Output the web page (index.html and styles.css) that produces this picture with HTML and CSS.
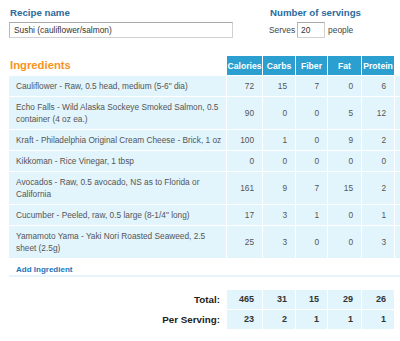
FILE: index.html
```html
<!DOCTYPE html>
<html>
<head>
<meta charset="utf-8">
<link rel="stylesheet" href="styles.css">
</head>
<body>
<div class="page">
  <div class="top">
    <div class="field name">
      <div class="label">Recipe name</div>
      <input class="text" value="Sushi (cauliflower/salmon)">
    </div>
    <div class="field servings">
      <div class="label">Number of servings</div>
      <div class="serves"><span>Serves</span><input class="num" value="20"><span>people</span></div>
    </div>
  </div>

  <table class="grid ing">
    <colgroup>
      <col class="c-name"><col class="c-cal"><col class="c-carb"><col class="c-fib"><col class="c-fat"><col class="c-pro"><col class="c-x">
    </colgroup>
    <thead>
      <tr><th class="title">Ingredients</th><th>Calories</th><th>Carbs</th><th>Fiber</th><th>Fat</th><th>Protein</th><th class="blank"></th></tr>
    </thead>
    <tbody>
      <tr><td class="nm">Cauliflower - Raw, 0.5 head, medium (5-6" dia)</td><td>72</td><td>15</td><td>7</td><td>0</td><td>6</td><td></td></tr>
      <tr><td class="nm">Echo Falls - Wild Alaska Sockeye Smoked Salmon, 0.5 container (4 oz ea.)</td><td>90</td><td>0</td><td>0</td><td>5</td><td>12</td><td></td></tr>
      <tr><td class="nm">Kraft - Philadelphia Original Cream Cheese - Brick, 1 oz</td><td>100</td><td>1</td><td>0</td><td>9</td><td>2</td><td></td></tr>
      <tr><td class="nm">Kikkoman - Rice Vinegar, 1 tbsp</td><td>0</td><td>0</td><td>0</td><td>0</td><td>0</td><td></td></tr>
      <tr><td class="nm">Avocados - Raw, 0.5 avocado, NS as to Florida or California</td><td>161</td><td>9</td><td>7</td><td>15</td><td>2</td><td></td></tr>
      <tr><td class="nm">Cucumber - Peeled, raw, 0.5 large (8-1/4" long)</td><td>17</td><td>3</td><td>1</td><td>0</td><td>1</td><td></td></tr>
      <tr><td class="nm">Yamamoto Yama - Yaki Nori Roasted Seaweed, 2.5 sheet (2.5g)</td><td>25</td><td>3</td><td>0</td><td>0</td><td>3</td><td></td></tr>
    </tbody>
  </table>

  <div class="add"><a class="add-link">Add Ingredient</a></div>

  <table class="grid totals">
    <colgroup>
      <col class="c-name"><col class="c-cal"><col class="c-carb"><col class="c-fib"><col class="c-fat"><col class="c-pro">
    </colgroup>
    <tbody>
      <tr><td class="lbl">Total:</td><td>465</td><td>31</td><td>15</td><td>29</td><td>26</td></tr>
      <tr><td class="lbl">Per Serving:</td><td>23</td><td>2</td><td>1</td><td>1</td><td>1</td></tr>
    </tbody>
  </table>
</div>
</body>
</html>
```
FILE: styles.css
```css
html, body {
  margin: 0;
  padding: 0;
  overflow: hidden;
  background: #fff;
}
body {
  font-family: "Liberation Sans", Arial, sans-serif;
  color: #555;
}
.page {
  padding: 7px 0 0 9px;
}
.top {
  display: flex;
}
.name {
  width: 260px;
}
.label {
  font-weight: bold;
  font-size: 9.7px;
  line-height: 12px;
  height: 12px;
  color: #2a6a9e;
  padding-left: 1px;
}
.text, .num {
  box-sizing: border-box;
  height: 16px;
  margin: 0;
  border: 1px solid #d0d0d0;
  border-top-color: #a8a8a8;
  border-left-color: #b8b8b8;
  font-family: "Liberation Sans", Arial, sans-serif;
  font-size: 8.4px;
  color: #333;
  background: #fff;
  outline: none;
}
.text {
  display: block;
  margin-top: 3px;
  width: 224px;
  padding: 0 4px;
}
.serves {
  display: flex;
  align-items: center;
  margin-top: 3px;
  height: 16px;
  font-size: 8.4px;
  color: #444;
}
.num {
  width: 28px;
  margin: 0 3px 0 2px;
  padding: 0 3px;
}
.grid {
  border-collapse: separate;
  border-spacing: 1px;
  table-layout: fixed;
  margin-left: -1px;
}
.ing {
  margin-top: 17px;
  width: 408px;
}
.totals {
  margin-top: 12px;
  width: 387px;
}
.c-name { width: 217px; }
.c-cal { width: 35px; }
.c-carb { width: 32px; }
.c-fib { width: 31px; }
.c-fat { width: 33px; }
.c-pro { width: 32px; }
.c-x { width: 20px; }
.grid th {
  height: 18px;
  padding: 0;
  line-height: 12px;
  background: #2a9fd0;
  color: #fff;
  font-size: 8.6px;
  font-weight: bold;
  text-align: center;
  white-space: nowrap;
}
.grid th.title {
  background: none;
  color: #f7941e;
  font-size: 11.3px;
  line-height: 14px;
  text-align: left;
  padding: 0 0 1px 1px;
}
.grid th.blank {
  background: none;
}
.grid td {
  background: #e2f4fc;
  padding: 4px 8px 4px 7px;
  line-height: 12px;
  font-size: 8.3px;
  color: #555;
  text-align: right;
}
.grid td.nm {
  text-align: left;
  padding-right: 2px;
}
.add {
  height: 16px;
  line-height: 16px;
  padding-left: 7px;
  border-bottom: 2px solid #e6f4fb;
}
.add-link {
  font-size: 8px;
  font-weight: bold;
  color: #1b75bb;
}
.totals td {
  height: 11px;
  line-height: 11px;
  font-size: 9px;
  font-weight: bold;
  color: #333;
}
.totals td.lbl {
  background: none;
  font-size: 9.8px;
  color: #222;
  padding-right: 6px;
}
```
